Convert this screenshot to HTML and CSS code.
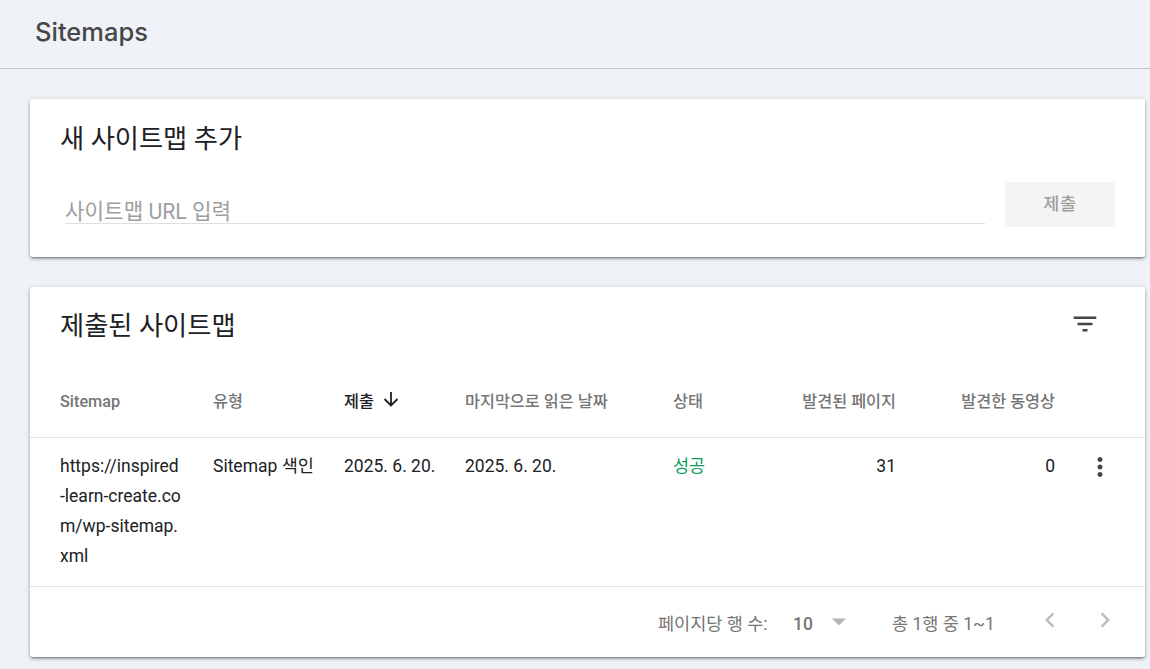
FILE: index.html
```html
<!DOCTYPE html>
<html lang="ko">
<head>
<meta charset="utf-8">
<title>Sitemaps</title>
<link rel="stylesheet" href="styles.css">
</head>
<body>
<header class="topbar"><h1 class="page-title">Sitemaps</h1></header>
<main class="content">
  <section class="card add-card">
    <h2 class="card-title">새 사이트맵 추가</h2>
    <form class="add-form">
      <div class="url-field"><span class="placeholder">사이트맵 URL 입력</span></div>
      <button class="submit" type="button" disabled>제출</button>
    </form>
  </section>
  <section class="card list-card">
    <div class="list-head">
      <h2 class="card-title">제출된 사이트맵</h2>
      <svg class="filter" width="30" height="30" viewBox="0 0 24 24"><path fill="#424548" d="M10 18h4v-2h-4v2zM3 6v2h18V6H3zm3 7h12v-2H6v2z"/></svg>
    </div>
    <div class="row labels">
      <span>Sitemap</span>
      <span>유형</span>
      <span class="sorted">제출<svg class="arrow" width="18" height="18" viewBox="0 0 18 18"><path d="M9 2v13M2.5 9L9 15.5 15.5 9" fill="none" stroke="#202124" stroke-width="1.8"/></svg></span>
      <span>마지막으로 읽은 날짜</span>
      <span>상태</span>
      <span class="num">발견된 페이지</span>
      <span class="num">발견한 동영상</span>
    </div>
    <div class="row entry">
      <span class="url">https://inspired<br>-learn-create.co<br>m/wp-sitemap.<br>xml</span>
      <span>Sitemap 색인</span>
      <span>2025. 6. 20.</span>
      <span>2025. 6. 20.</span>
      <span class="ok">성공</span>
      <span class="num">31</span>
      <span class="num">0</span>
      <svg class="more" width="30" height="30" viewBox="0 0 24 24"><path fill="#424548" d="M12 8c1.1 0 2-.9 2-2s-.9-2-2-2-2 .9-2 2 .9 2 2 2zm0 2c-1.1 0-2 .9-2 2s.9 2 2 2 2-.9 2-2-.9-2-2-2zm0 6c-1.1 0-2 .9-2 2s.9 2 2 2 2-.9 2-2-.9-2-2-2z"/></svg>
    </div>
    <footer class="pager">
      <span class="per-page">페이지당 행 수:</span>
      <span class="size">10</span>
      <svg class="caret" width="14" height="8" viewBox="0 0 14 8"><path fill="#b3b3b3" d="M0 .5h14L7 7.5z"/></svg>
      <span class="range">총 1행 중 1~1</span>
      <svg class="prev" width="30" height="30" viewBox="0 0 24 24"><path fill="#bdbdbd" d="M15.41 7.41L14 6l-6 6 6 6 1.41-1.41L10.83 12z"/></svg>
      <svg class="next" width="30" height="30" viewBox="0 0 24 24"><path fill="#bdbdbd" d="M10 6L8.59 7.41 13.17 12l-4.58 4.59L10 18l6-6z"/></svg>
    </footer>
  </section>
</main>
</body>
</html>
```
FILE: styles.css
```css
* { box-sizing: border-box; }
body {
  margin: 0;
  height: 669px;
  overflow: hidden;
  background: #eff3f8;
  color: #202124;
  font: 17.5px/30px Roboto, "Noto Sans CJK KR", sans-serif;
}
h1, h2 { margin: 0; font-weight: 400; }
svg { display: block; flex: none; }
.topbar {
  height: 69px;
  padding: 12px 35px 0;
  border-bottom: 1px solid #c4c7ca;
}
.page-title {
  font: 500 25.5px/40px Inter, sans-serif;
  letter-spacing: 0;
  color: #474747;
}
.content {
  display: flex;
  flex-direction: column;
  gap: 30px;
  padding: 30px 5px 0 30px;
}
.card {
  background: #fff;
  border-radius: 3px;
  box-shadow: 0 3px 1px -2px rgba(0, 0, 0, .2), 0 2px 3px rgba(0, 0, 0, .24), 0 1px 5px rgba(0, 0, 0, .18);
}
.card-title { font-size: 26.25px; line-height: 40px; white-space: nowrap; }
.add-card { height: 158px; padding: 20px 30px 0; }
.add-form { display: flex; gap: 20px; padding: 23px 0 0 5px; }
.url-field { flex: 1; height: 42px; border-bottom: 1px solid #dcdee0; padding-top: 15px; }
.placeholder { color: #9e9e9e; font-size: 21.25px; }
.submit {
  width: 110px;
  height: 45px;
  padding: 0;
  border: 0;
  border-radius: 3px;
  background: #f4f4f4;
  color: #9e9e9e;
  font: 500 17.5px/45px Roboto, "Noto Sans CJK KR", sans-serif;
  letter-spacing: .6px;
}
.list-card { height: 370px; }
.list-head { display: flex; justify-content: space-between; height: 78px; padding: 19px 45px 0 30px; }
.filter { margin-top: 3px; }
.row {
  display: grid;
  grid-template-columns: 153px 131px 121px 208px 103px 120px 159px 30px;
  column-gap: 0;
  padding: 0 30px;
  border-bottom: 1px solid #dfe1e3;
  white-space: nowrap;
}
.num { text-align: right; }
.labels { height: 73px; padding-top: 22px; font-size: 16.25px; font-weight: 500; color: #757575; }
.sorted { display: flex; color: #202124; }
.arrow { margin: 3px 0 0 8px; }
.entry { height: 149px; padding-top: 13px; }
.ok { color: #0f9d58; }
.more { margin: 1px 0 0 30px; }
.pager { display: flex; height: 70px; padding: 22px 0 0 628px; color: #757575; white-space: nowrap; }
.per-page { width: 135px; }
.size { width: 39px; font-weight: 500; }
.caret { margin: 9px 0 0; }
.range { width: 143px; margin-left: 46px; }
.prev { margin: -4px 0 0; }
.next { margin: -4px 0 0 25px; }
```
